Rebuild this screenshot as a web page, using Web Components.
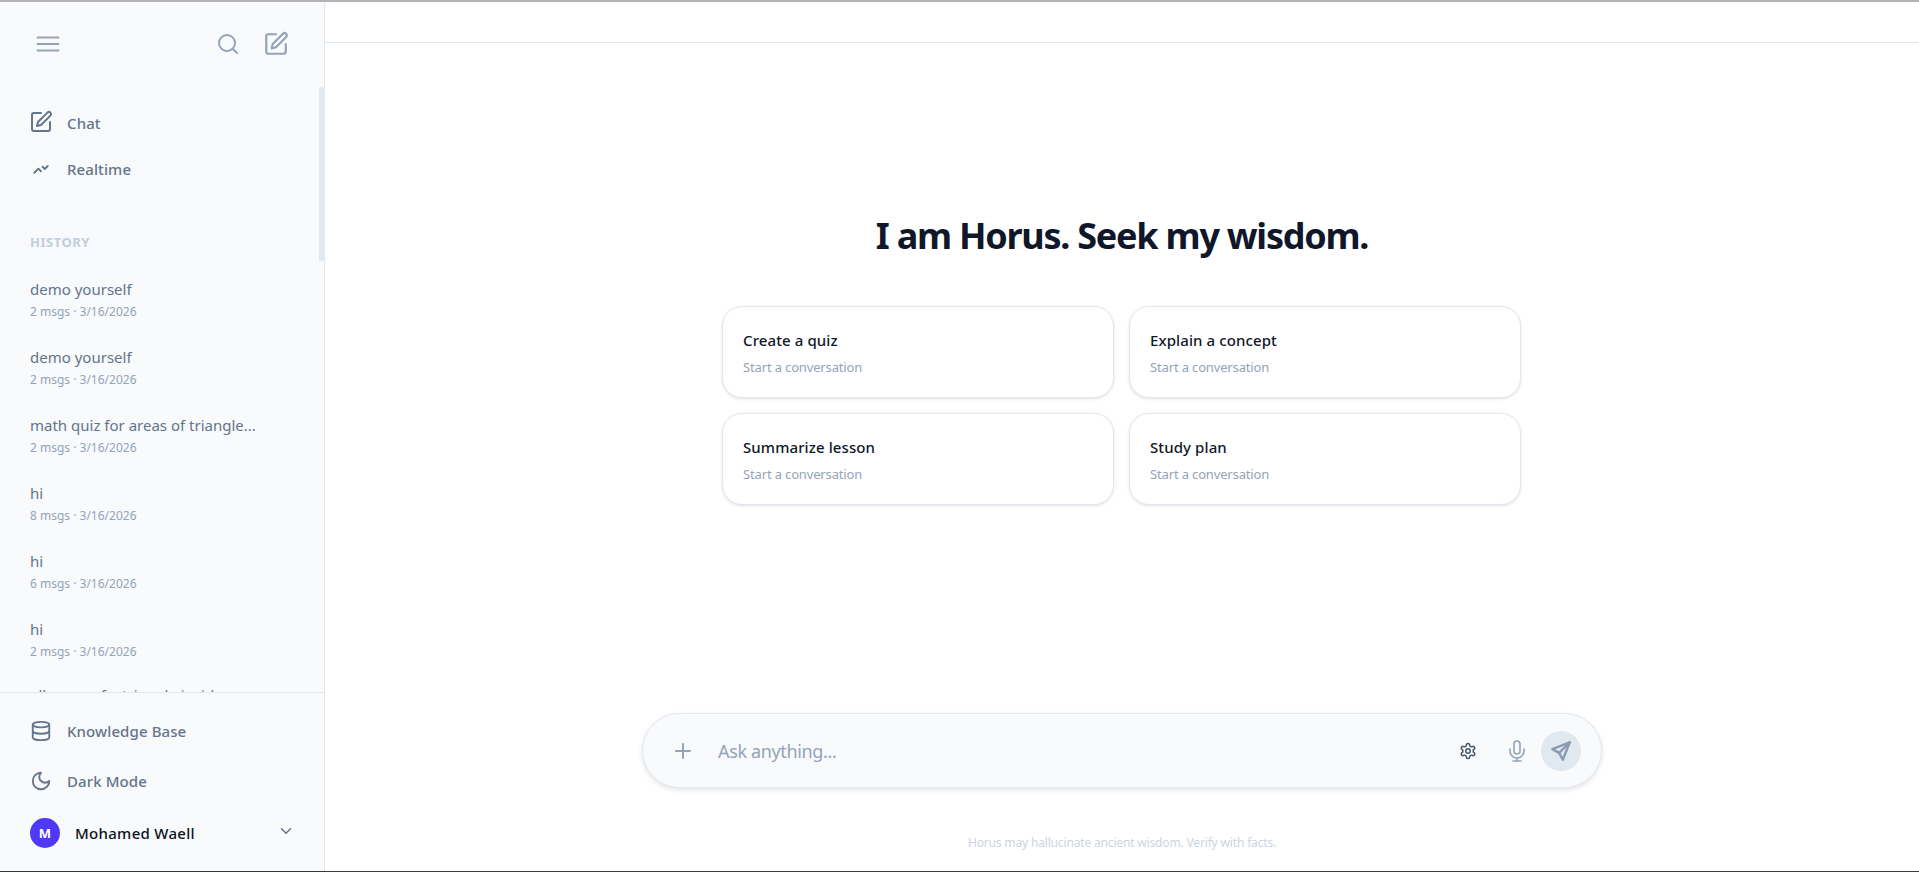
<!DOCTYPE html>
<html><head><meta charset="utf-8"><style>
html,body{margin:0;height:100%;background:#fff;overflow:hidden}
body{font-family:"Noto Sans","Open Sans",sans-serif;}
app-shell{height:872px}
</style></head><body>
<app-shell>
  <side-bar slot="side"></side-bar>
  <main-pane slot="main"></main-pane>
</app-shell>
<script>
const I={
menu:'<path d="M1.5 5.5h21M1.5 12h21M1.5 18.5h21"/>',
search:'<circle cx="11" cy="11" r="8"/><path d="m21 21-4.3-4.3"/>',
edit:'<path d="M12 3H5a2 2 0 0 0-2 2v14a2 2 0 0 0 2 2h14a2 2 0 0 0 2-2v-7"/><path d="M18.4 2.6a2.12 2.12 0 0 1 3 3L12 15l-4 1 1-4Z"/>',
pulse:'<path d="M3 17l5.5-5.5 3.5 3.5"/><path d="M14 9l3 3 4-4"/>',
db:'<ellipse cx="12" cy="5" rx="9" ry="3"/><path d="M3 5v14a9 3 0 0 0 18 0V5"/><path d="M3 12a9 3 0 0 0 18 0"/>',
moon:'<path d="M12 3a6 6 0 0 0 9 9 9 9 0 1 1-9-9Z"/>',
chev:'<path d="m6 9 6 6 6-6"/>',
plus:'<path d="M5 12h14M12 5v14"/>',
gear:'<path d="M12.22 2h-.44a2 2 0 0 0-2 2v.18a2 2 0 0 1-1 1.73l-.43.25a2 2 0 0 1-2 0l-.15-.08a2 2 0 0 0-2.73.73l-.22.38a2 2 0 0 0 .73 2.73l.15.1a2 2 0 0 1 1 1.72v.51a2 2 0 0 1-1 1.74l-.15.09a2 2 0 0 0-.73 2.73l.22.38a2 2 0 0 0 2.73.73l.15-.08a2 2 0 0 1 2 0l.43.25a2 2 0 0 1 1 1.73V20a2 2 0 0 0 2 2h.44a2 2 0 0 0 2-2v-.18a2 2 0 0 1 1-1.73l.43-.25a2 2 0 0 1 2 0l.15.08a2 2 0 0 0 2.73-.73l.22-.39a2 2 0 0 0-.73-2.73l-.15-.08a2 2 0 0 1-1-1.74v-.5a2 2 0 0 1 1-1.74l.15-.09a2 2 0 0 0 .73-2.73l-.22-.38a2 2 0 0 0-2.73-.73l-.15.08a2 2 0 0 1-2 0l-.43-.25a2 2 0 0 1-1-1.73V4a2 2 0 0 0-2-2z"/><circle cx="12" cy="12" r="3"/>',
mic:'<path d="M12 2a3 3 0 0 0-3 3v7a3 3 0 0 0 6 0V5a3 3 0 0 0-3-3Z"/><path d="M19 10v2a7 7 0 0 1-14 0v-2"/><path d="M12 19v3"/><path d="M8 22h8"/>',
send:'<path d="M21.5 2.5 2.5 10l7.5 4 4 7.5z"/><path d="m21.5 2.5-11.5 11.5"/>'
};
class UiIcon extends HTMLElement{
  static get observedAttributes(){return['name','size','sw']}
  connectedCallback(){this.render()}
  attributeChangedCallback(){this.render()}
  render(){
    const s=this.getAttribute('size')||24,sw=this.getAttribute('sw')||2,n=this.getAttribute('name');
    if(!this.shadowRoot)this.attachShadow({mode:'open'});
    this.shadowRoot.innerHTML=`<style>:host{display:inline-flex;flex:none;width:${s}px;height:${s}px}svg{display:block}</style><svg xmlns="http://www.w3.org/2000/svg" width="${s}" height="${s}" viewBox="0 0 24 24" fill="none" stroke="currentColor" stroke-width="${sw}" stroke-linecap="round" stroke-linejoin="round">${I[n]||''}</svg>`;
  }
}
customElements.define('ui-icon',UiIcon);

class AppShell extends HTMLElement{constructor(){super();this.attachShadow({mode:'open'}).innerHTML=`<style>
:host{display:flex;flex-direction:column;width:1919px;height:872px;overflow:hidden;background:#fff}
.top{height:2px;background:#b3b3b8;flex:none}
.row{flex:1;display:flex;min-height:0}
.bot{height:1px;background:#3a3a3a;flex:none}
</style><div class="top"></div><div class="row"><slot name="side"></slot><slot name="main"></slot></div><div class="bot"></div>`}}
customElements.define('app-shell',AppShell);

class NavItem extends HTMLElement{constructor(){super();const ic=this.getAttribute('icon'),s=this.getAttribute('isize')||24;this.attachShadow({mode:'open'}).innerHTML=`<style>
:host{display:flex;align-items:center;gap:14px;height:var(--h,46px);padding-left:29px;color:#64748b;font-size:15px;font-weight:500;letter-spacing:.1px}
.i{width:24px;display:flex;justify-content:center;margin-top:var(--it,-3px)}
</style><span class="i"><ui-icon name="${ic}" size="${s}" sw="${this.getAttribute('sw')||2}"></ui-icon></span><span><slot></slot></span>`}}
customElements.define('nav-item',NavItem);

class HistItem extends HTMLElement{constructor(){super();const meta=this.getAttribute('meta');this.attachShadow({mode:'open'}).innerHTML=`<style>
:host{display:block;height:68px;padding-left:30px;box-sizing:border-box;padding-top:10px}
.t{font-size:15px;line-height:22px;color:#64748b;white-space:nowrap}
.m{font-size:12px;line-height:18px;color:#94a3b8;margin-top:3px;white-space:nowrap}
</style><div class="t"><slot></slot></div>${meta?`<div class="m">${meta}</div>`:''}`}}
customElements.define('hist-item',HistItem);

class SideBar extends HTMLElement{constructor(){super();this.attachShadow({mode:'open'}).innerHTML=`<style>
:host{display:flex;flex-direction:column;flex:none;width:325px;box-sizing:border-box;background:#f8fafc;border-right:1px solid #e2e8f0;height:100%;position:relative}
.head{height:98px;flex:none;display:flex;align-items:center;padding:0 35px 14px 36px;color:#94a3b8;box-sizing:border-box}
.sp{flex:1}
.head ui-icon+ui-icon{margin-left:23px}
.scroll{flex:1;min-height:0;overflow:hidden}
.thumb{position:absolute;right:0;top:85px;width:5px;height:174px;background:#e2e8f0;border-radius:3px}
.lbl{font-size:13px;font-weight:700;letter-spacing:.5px;color:#c2cedd;padding-left:30px;line-height:18px;margin:41px 0 17px}
.foot{flex:none;border-top:1px solid #e2e8f0;height:179px;box-sizing:border-box;padding-top:13px}
nav-item.k{--h:50px;--it:0px}
.user{display:flex;align-items:center;height:32px;padding:0 30px;margin-top:11px;font-size:15px;font-weight:500;letter-spacing:.3px}
.av{width:30px;height:30px;border-radius:50%;background:#4f39f6;color:#fff;font-size:13px;font-weight:700;letter-spacing:0;display:flex;align-items:center;justify-content:center;margin-right:15px}
.user span.n{flex:1;color:#0b1220}
.user ui-icon{color:#64748b;margin:0 -1px 4px 0}
</style>
<div class="thumb"></div>
<div class="head"><ui-icon name="menu" size="24"></ui-icon><span class="sp"></span><ui-icon name="search" size="24"></ui-icon><ui-icon name="edit" size="26" sw="2"></ui-icon></div>
<div class="scroll">
<nav-item icon="edit">Chat</nav-item>
<nav-item icon="pulse" isize="18" sw="2.4" style="--it:-1px">Realtime</nav-item>
<div class="lbl">HISTORY</div>
<hist-item meta="2 msgs · 3/16/2026">demo yourself</hist-item>
<hist-item meta="2 msgs · 3/16/2026">demo yourself</hist-item>
<hist-item meta="2 msgs · 3/16/2026">math quiz for areas of triangle...</hist-item>
<hist-item meta="8 msgs · 3/16/2026">hi</hist-item>
<hist-item meta="6 msgs · 3/16/2026">hi</hist-item>
<hist-item meta="2 msgs · 3/16/2026">hi</hist-item>
<hist-item style="padding-top:8px">all sums of a triangle inside</hist-item>
</div>
<div class="foot"><nav-item class="k" icon="db" isize="22">Knowledge Base</nav-item><nav-item class="k" icon="moon" isize="22">Dark Mode</nav-item>
<div class="user"><div class="av">M</div><span class="n">Mohamed Waell</span><ui-icon name="chev" size="18"></ui-icon></div></div>`}}
customElements.define('side-bar',SideBar);

class PromptCard extends HTMLElement{constructor(){super();this.attachShadow({mode:'open'}).innerHTML=`<style>
:host{display:block;height:92px;box-sizing:border-box;background:#fff;border:1px solid #e2e8f0;border-radius:20px;box-shadow:0 1px 3px rgba(15,23,42,.12);padding:22px 20px 0}
.t{font-size:15px;line-height:22px;font-weight:500;color:#0f172a;letter-spacing:.1px}
.s{font-size:13px;line-height:18px;color:#94a3b8;margin-top:7px;letter-spacing:-.15px}
</style><div class="t"><slot></slot></div><div class="s">Start a conversation</div>`}}
customElements.define('prompt-card',PromptCard);

class ChatInput extends HTMLElement{constructor(){super();this.attachShadow({mode:'open'}).innerHTML=`<style>
:host{display:flex;align-items:center;width:960px;height:75px;box-sizing:border-box;background:#f8fafc;border:1px solid #e2e8f0;border-radius:38px;box-shadow:0 2px 5px rgba(15,23,42,.12);padding:0 20px 0 28px}
.p{flex:1;font-size:18px;color:#94a3b8;margin-left:23px;letter-spacing:-.35px}
.g{color:#475569;margin-right:28px}.m{color:#94a3b8;margin-right:12px}
.send{width:40px;height:40px;border-radius:50%;background:#e2e8f0;color:#8a9ab2;display:flex;align-items:center;justify-content:center}
</style><ui-icon name="plus" size="24" style="color:#94a3b8"></ui-icon><span class="p">Ask anything...</span><ui-icon class="g" name="gear" size="18" sw="2"></ui-icon><ui-icon class="m" name="mic" size="24" sw="1.6"></ui-icon><span class="send"><ui-icon name="send" size="22" sw="2.6"></ui-icon></span>`}}
customElements.define('chat-input',ChatInput);

class MainPane extends HTMLElement{constructor(){super();this.attachShadow({mode:'open'}).innerHTML=`<style>
:host{flex:1;display:flex;flex-direction:column;min-width:0;height:100%;align-items:stretch}
.bar{height:40px;flex:none;border-bottom:1px solid #e2e8f0}
.c{flex:1;display:flex;flex-direction:column;align-items:center}
h1{margin:169px 0 0;font-size:36px;line-height:48px;font-weight:700;color:#0f172a;letter-spacing:-1.25px}
.grid{display:grid;grid-template-columns:392px 392px;gap:15px;margin:46px 1px 0 0}
chat-input{margin-top:208px}
.fine{font-size:12px;line-height:16px;color:#cbd5e1;margin-top:47px;letter-spacing:-.16px}
</style><div class="bar"></div><div class="c"><h1>I am Horus. Seek my wisdom.</h1>
<div class="grid"><prompt-card>Create a quiz</prompt-card><prompt-card>Explain a concept</prompt-card><prompt-card>Summarize lesson</prompt-card><prompt-card>Study plan</prompt-card></div>
<chat-input></chat-input><div class="fine">Horus may hallucinate ancient wisdom. Verify with facts.</div></div>`}}
customElements.define('main-pane',MainPane);
</script></body></html>
